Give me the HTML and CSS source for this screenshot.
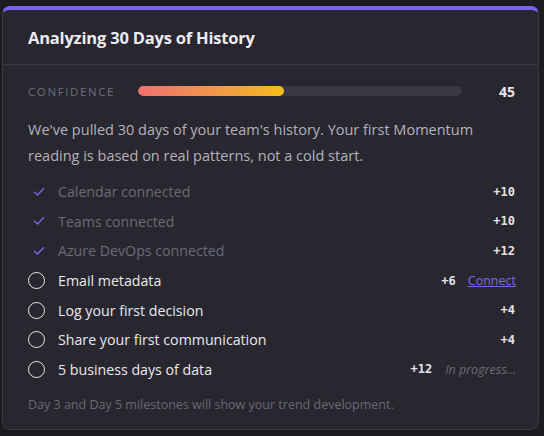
FILE: index.html
```html
<!DOCTYPE html>
<html>
<head>
<meta charset="utf-8">
<link rel="stylesheet" href="styles.css">
</head>
<body>
<div class="card">
  <div class="header">
    <h1 class="title">Analyzing 30 Days of History</h1>
  </div>
  <div class="content">
    <div class="conf-row">
      <span class="conf-label">CONFIDENCE</span>
      <div class="bar"><div class="fill" style="width:45%"></div></div>
      <span class="conf-value">45</span>
    </div>
    <p class="intro">We've pulled 30 days of your team's history. Your first Momentum reading is based on real patterns, not a cold start.</p>
    <ul class="list">
      <li class="item done">
        <span class="icon"><svg width="12" height="10" viewBox="0 0 12 10"><path d="M1.5 5.2 L4.6 8 L10.5 1.8" fill="none" stroke="#7a62e8" stroke-width="1.5" stroke-linecap="round" stroke-linejoin="round"/></svg></span>
        <span class="label">Calendar connected</span>
        <span class="pts">+10</span>
      </li>
      <li class="item done">
        <span class="icon"><svg width="12" height="10" viewBox="0 0 12 10"><path d="M1.5 5.2 L4.6 8 L10.5 1.8" fill="none" stroke="#7a62e8" stroke-width="1.5" stroke-linecap="round" stroke-linejoin="round"/></svg></span>
        <span class="label">Teams connected</span>
        <span class="pts">+10</span>
      </li>
      <li class="item done">
        <span class="icon"><svg width="12" height="10" viewBox="0 0 12 10"><path d="M1.5 5.2 L4.6 8 L10.5 1.8" fill="none" stroke="#7a62e8" stroke-width="1.5" stroke-linecap="round" stroke-linejoin="round"/></svg></span>
        <span class="label">Azure DevOps connected</span>
        <span class="pts">+12</span>
      </li>
      <li class="item">
        <span class="icon"><span class="circle"></span></span>
        <span class="label">Email metadata</span>
        <span class="pts">+6</span>
        <a class="action" href="#">Connect</a>
      </li>
      <li class="item">
        <span class="icon"><span class="circle"></span></span>
        <span class="label">Log your first decision</span>
        <span class="pts">+4</span>
      </li>
      <li class="item">
        <span class="icon"><span class="circle"></span></span>
        <span class="label">Share your first communication</span>
        <span class="pts">+4</span>
      </li>
      <li class="item">
        <span class="icon"><span class="circle"></span></span>
        <span class="label">5 business days of data</span>
        <span class="pts">+12</span>
        <span class="status">In progress...</span>
      </li>
    </ul>
    <p class="note">Day 3 and Day 5 milestones will show your trend development.</p>
  </div>
</div>
</body>
</html>
```
FILE: styles.css
```css
html, body {
  margin: 0;
  padding: 0;
  background: #1c1b20;
}
body {
  padding: 6px 5px 0 2px;
  font-family: "Open Sans", "Noto Sans", sans-serif;
}
.card {
  background: #28272f;
  border: 1px solid #3a3941;
  border-top: 4px solid #7b61f0;
  border-radius: 8px;
  height: 424px;
  box-sizing: border-box;
  overflow: hidden;
}
.header {
  height: 55px;
  border-bottom: 1px solid #393840;
  display: flex;
  align-items: center;
  padding: 1px 25px 0;
  box-sizing: border-box;
}
.title {
  margin: 0;
  font-size: 16.5px;
  font-weight: 700;
  color: #ecebf2;
  letter-spacing: -0.2px;
}
.content {
  padding: 0 22px 0 25px;
}
.conf-row {
  display: flex;
  align-items: center;
  height: 52px;
}
.conf-label {
  width: 110px;
  font-size: 11.5px;
  letter-spacing: 1.6px;
  color: #6f6d79;
}
.bar {
  flex: 0 0 324px;
  height: 10px;
  background: #393841;
  border-radius: 5px;
  overflow: hidden;
}
.fill {
  height: 100%;
  border-radius: 5px;
  background: linear-gradient(90deg, #f07072, #f2a43a 70%, #f6bd1c);
}
.conf-value {
  margin-left: auto;
  margin-right: 1px;
  font-size: 14px;
  font-weight: 700;
  color: #e6e5ec;
}
.intro {
  margin: 0;
  font-size: 14.5px;
  line-height: 26px;
  color: #b3b1bd;
  padding-right: 30px;
}
.list {
  list-style: none;
  margin: 8px 0 0;
  padding: 0;
}
.item {
  display: flex;
  align-items: center;
  height: 29.6px;
  font-size: 14.2px;
}
.icon {
  width: 30px;
  display: flex;
  align-items: center;
}
.done .icon {
  padding-left: 5px;
  width: 25px;
}
.circle {
  width: 15px;
  height: 15px;
  border: 1.8px solid #e8e7ee;
  border-radius: 50%;
}
.label {
  color: #e9e8ef;
}
.done .label {
  color: #6c6a76;
}
.pts {
  margin-left: auto;
  margin-right: 1px;
  font-family: "DejaVu Sans Mono", monospace;
  font-weight: 700;
  font-size: 12px;
  color: #e4e3ea;
}
.action {
  margin-left: 11px;
  margin-right: 0;
  font-size: 12.5px;
  color: #7b68ee;
  text-decoration: underline;
}
.status {
  margin-left: 12px;
  font-size: 12.5px;
  font-style: italic;
  color: #6c6a76;
}
.note {
  margin: 12px 0 0;
  font-size: 12.5px;
  color: #6a6874;
}
```
